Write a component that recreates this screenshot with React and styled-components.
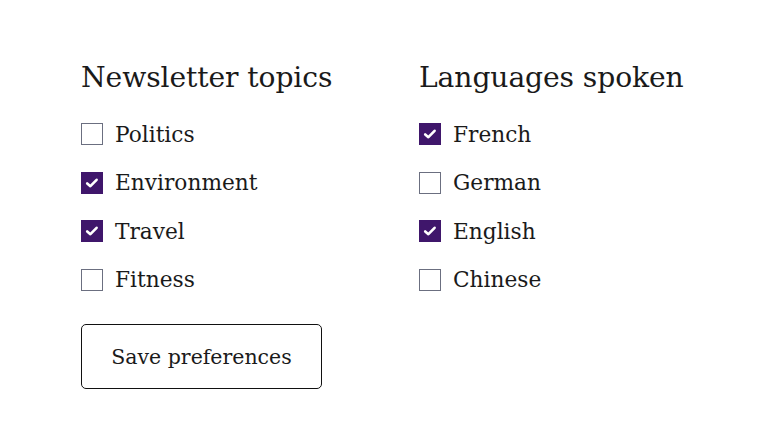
import React, { useState } from "react";
import styled, { createGlobalStyle } from "styled-components";

const GlobalStyle = createGlobalStyle`
  html, body { margin: 0; padding: 0; background: #ffffff; }
  body { font-family: "DejaVu Serif", "Liberation Serif", serif; color: #1a1a1a; }
`;

const Page = styled.div`
  padding: 58px 0 0 81px;
`;

const Columns = styled.div`
  display: grid;
  grid-template-columns: 338px 300px;
`;

const Group = styled.fieldset`
  border: 0;
  margin: 0;
  padding: 0;
  display: flex;
  flex-direction: column;
`;

const Heading = styled.legend`
  padding: 0;
  font-size: 28.2px;
  line-height: 40px;
  font-weight: 400;
  letter-spacing: -0.1px;
  margin-bottom: 12px;
`;

const Option = styled.label`
  display: flex;
  align-items: center;
  gap: 12px;
  height: 48.5px;
  font-size: 21.7px;
  cursor: pointer;
`;

const Box = styled.span`
  box-sizing: border-box;
  width: 22px;
  height: 22px;
  flex: none;
  display: flex;
  align-items: center;
  justify-content: center;
  border: ${(p) => (p.checked ? "none" : "1.5px solid #6b6f80")};
  background: ${(p) => (p.checked ? "#3f166b" : "#ffffff")};
`;

const HiddenInput = styled.input`
  position: absolute;
  opacity: 0;
  width: 0;
  height: 0;
`;

const SaveButton = styled.button`
  margin-top: 20px;
  width: 241px;
  height: 65px;
  border: 1px solid #111;
  border-radius: 5px;
  background: #fff;
  font-family: inherit;
  font-size: 20.5px;
  color: #1a1a1a;
  cursor: pointer;
`;

function Check({ label, checked, onToggle }) {
  return (
    <Option>
      <HiddenInput type="checkbox" checked={checked} onChange={onToggle} />
      <Box checked={checked}>
        {checked && (
          <svg width="16" height="16" viewBox="0 0 16 16">
            <path d="M3.2 8.4 L6.4 11.2 L12.6 4.8" fill="none" stroke="#fff" strokeWidth="2.6" strokeLinecap="round" strokeLinejoin="round" />
          </svg>
        )}
      </Box>
      {label}
    </Option>
  );
}

function CheckGroup({ title, items, setItems }) {
  return (
    <Group>
      <Heading>{title}</Heading>
      {items.map((it, i) => (
        <Check
          key={it.label}
          label={it.label}
          checked={it.checked}
          onToggle={() =>
            setItems(items.map((x, j) => (j === i ? { ...x, checked: !x.checked } : x)))
          }
        />
      ))}
    </Group>
  );
}

export default function App() {
  const [topics, setTopics] = useState([
    { label: "Politics", checked: false },
    { label: "Environment", checked: true },
    { label: "Travel", checked: true },
    { label: "Fitness", checked: false },
  ]);
  const [langs, setLangs] = useState([
    { label: "French", checked: true },
    { label: "German", checked: false },
    { label: "English", checked: true },
    { label: "Chinese", checked: false },
  ]);

  return (
    <Page>
      <GlobalStyle />
      <Columns>
        <CheckGroup title="Newsletter topics" items={topics} setItems={setTopics} />
        <CheckGroup title="Languages spoken" items={langs} setItems={setLangs} />
      </Columns>
      <SaveButton>Save preferences</SaveButton>
    </Page>
  );
}
